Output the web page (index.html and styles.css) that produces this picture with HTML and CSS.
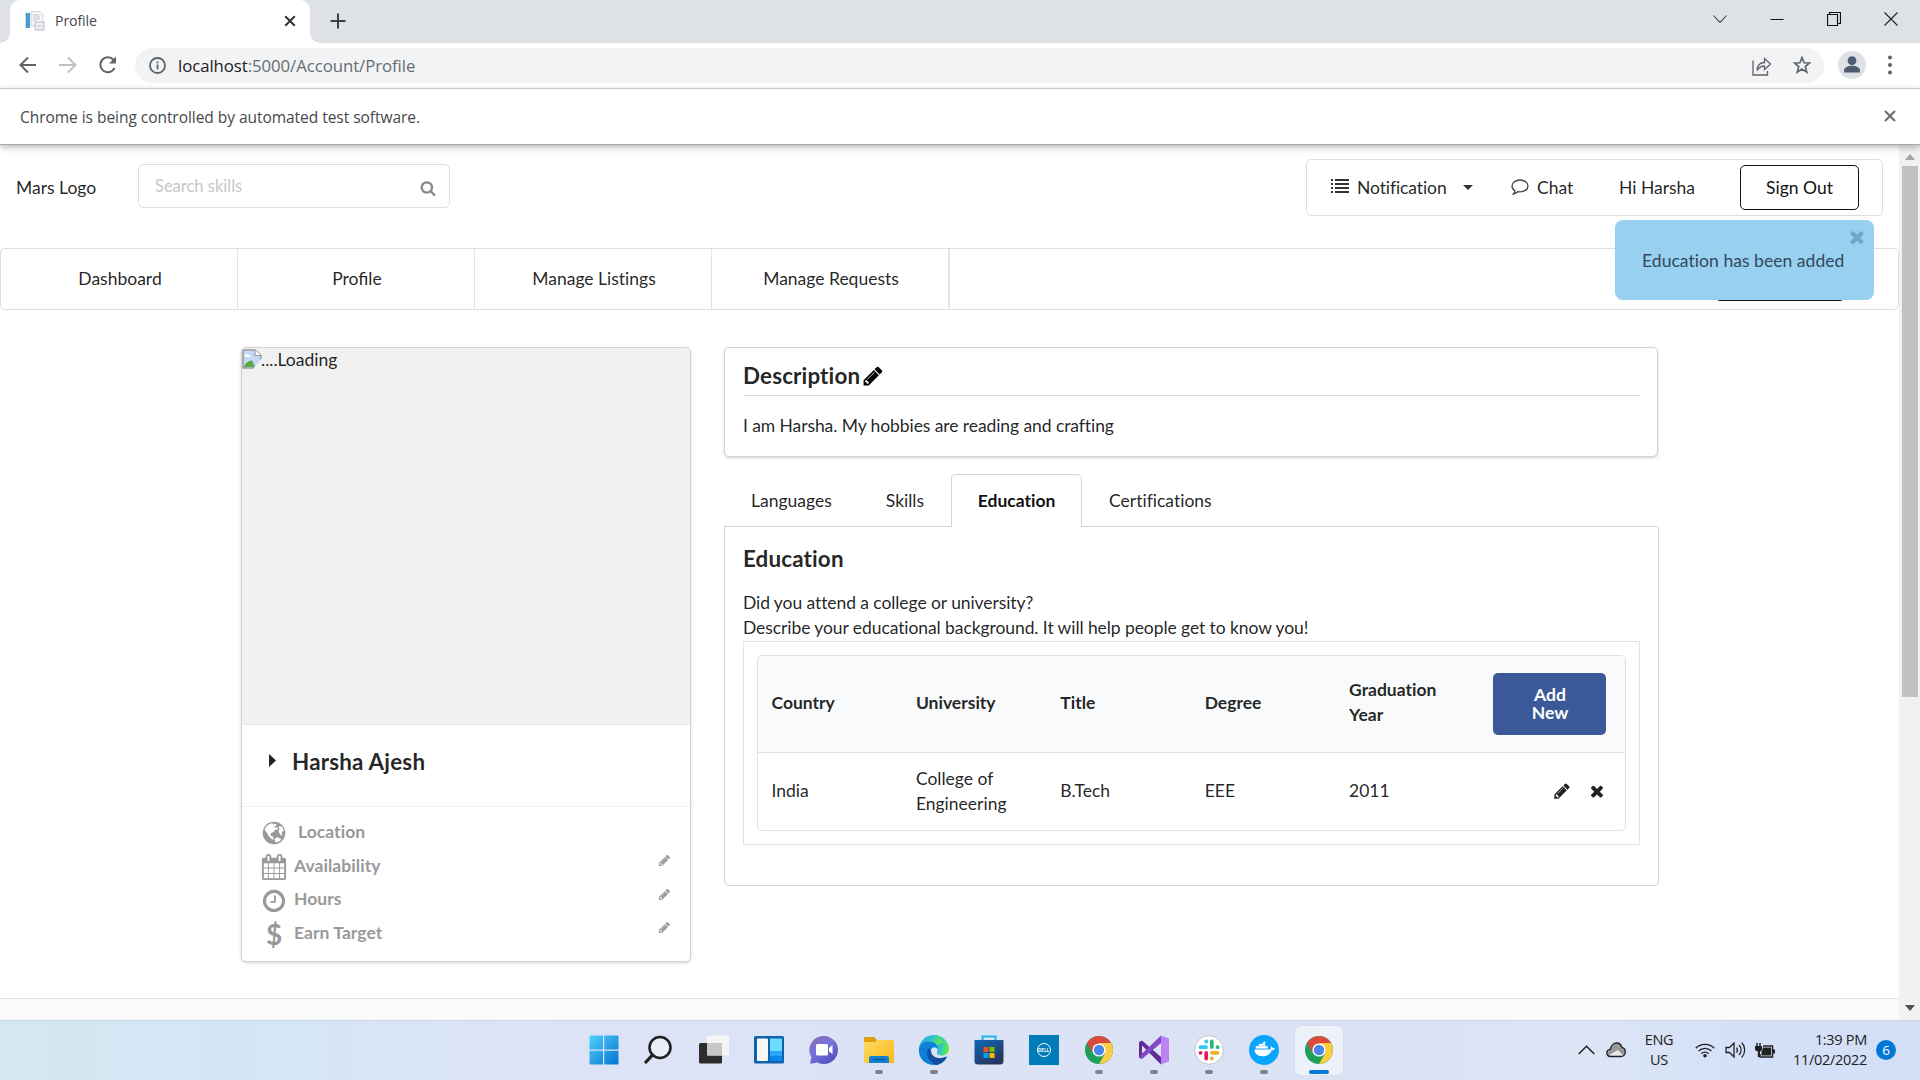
FILE: index.html
```html
<!DOCTYPE html>
<html lang="en">
<head>
<meta charset="utf-8">
<title>Profile</title>
<link rel="stylesheet" href="styles.css">
</head>
<body>
<svg class="defs" width="0" height="0" aria-hidden="true">
  <symbol id="pencil" viewBox="0 0 1792 1792"><path d="M491 1536l91-91-235-235-91 91v107h128v128h107zm523-928q0-22-22-22-10 0-17 7l-542 542q-7 7-7 17 0 22 22 22 10 0 17-7l542-542q7-7 7-17zm-54-192l416 416-832 832h-416v-416zm683 96q0 53-37 90l-166 166-416-416 166-165q36-38 90-38 53 0 91 38l235 234q37 39 37 91z"/></symbol>
  <symbol id="times" viewBox="0 0 1792 1792"><path d="M1490 1322q0 40-28 68l-136 136q-28 28-68 28t-68-28l-294-294-294 294q-28 28-68 28t-68-28l-136-136q-28-28-28-68t28-68l294-294-294-294q-28-28-28-68t28-68l136-136q28-28 68-28t68 28l294 294 294-294q28-28 68-28t68 28l136 136q28 28 28 68t-28 68l-294 294 294 294q28 28 28 68z"/></symbol>
  <symbol id="chrome" viewBox="0 0 28 28">
    <circle cx="14" cy="14" r="14" fill="#1fa05a"/>
    <path d="M14 14 1.9 7A14 14 0 0 1 26.1 7z" fill="#db4a3c"/>
    <path d="M14 7H26.1A14 14 0 0 1 14 28L20 17.5z" fill="#fdcd40"/>
    <path d="M1.9 7 8 17.5 14 7z" fill="#db4a3c"/>
    <circle cx="14" cy="14" r="6.6" fill="#fff"/><circle cx="14" cy="14" r="5.2" fill="#4a86ee"/>
  </symbol>
</svg>

<header class="tabstrip">
  <div class="tab">
    <svg class="favicon" width="20" height="20" viewBox="0 0 20 20"><path d="M1 2h4v15H1z" fill="#4c9bd3"/><path d="M0 1h1v16H0z" fill="#b9dcf2"/><path d="M6 .5h9l3 3V15H6z" fill="#f4f5f7" stroke="#d2d5da"/><path d="M8 4h6M8 6h7M8 8h7M8 10h3" stroke="#c4c7cc"/><path d="M11 11h8v8h-9v-6z" fill="#eceef1" stroke="#b8bcc4"/><path d="M12 15h5" stroke="#c4c7cc"/></svg>
    <span class="tab-title">Profile</span>
    <svg width="12" height="12" viewBox="0 0 12 12"><path d="M1.2 1.2l9.600 9.600M10.800 1.200L1.200 10.800" stroke="#33363a" stroke-width="2"/></svg>
  </div>
  <svg class="new-tab" width="16" height="16" viewBox="0 0 16 16"><path d="M8 .5v15M.5 8h15" stroke="#3c4043" stroke-width="2"/></svg>
  <div class="window-controls">
    <svg width="14" height="10" viewBox="0 0 14 10"><path d="M.5 1.500L7 8.500l6.500-7" fill="none" stroke="#333" stroke-width="1.100"/></svg>
    <svg width="14" height="14" viewBox="0 0 14 14"><path d="M.5 7.500h13" stroke="#111"/></svg>
    <svg width="14" height="16" viewBox="0 0 14 16"><path d="M.5 3.500h10v11H.5zM2.500 3V1.500h11v11H11" fill="none" stroke="#111" stroke-width="1.200"/></svg>
    <svg width="14" height="16" viewBox="0 0 14 16"><path d="M.5 1.500l13 13M13.500 1.500l-13 13" stroke="#222" stroke-width="1.100"/></svg>
  </div>
</header>

<div class="toolbar">
  <svg width="18" height="18" viewBox="0 0 18 18"><path d="M17 9H2M9 1.500L1.500 9 9 16.500" fill="none" stroke="#5f6368" stroke-width="2"/></svg>
  <svg width="18" height="18" viewBox="0 0 18 18"><path d="M0 9h16M9 1.500L16.500 9 9 16.500" fill="none" stroke="#bdc1c6" stroke-width="2"/></svg>
  <svg class="reload" width="20" height="20" viewBox="0 0 20 20"><path d="M16.600 13A7.500 7.500 0 1 1 15.600 5" fill="none" stroke="#5f6368" stroke-width="2"/><path d="M18 1.500V8.500H11z" fill="#5f6368"/></svg>
  <div class="omnibox">
    <svg width="17" height="17" viewBox="0 0 17 17"><circle cx="8.500" cy="8.500" r="7.500" fill="none" stroke="#5f6368" stroke-width="1.800"/><path d="M8.500 7.400v5M8.500 4.400v1.800" stroke="#5f6368" stroke-width="1.800"/></svg>
    <span class="url"><b>localhost</b>:5000/Account/Profile</span>
    <svg class="share" width="20" height="21" viewBox="0 0 20 21"><path d="M1 5.500v14.500h14.500v-4M5 15.500c.5-5.500 3.500-8 7.500-8V3.500l6 5.500-6 5.500v-3.500c-3.500 0-5.500 1.500-7.500 4.500z" fill="none" stroke="#5f6368" stroke-width="1.300"/></svg>
    <svg width="18" height="20" viewBox="0 0 18 20"><path d="M9 2.500l2.100 5.300 5.300.3-4.100 3.500 1.400 5.500L9 14l-4.700 3.100 1.400-5.500L1.600 8.100l5.300-.3z" fill="none" stroke="#5f6368" stroke-width="1.700"/></svg>
  </div>
  <svg class="avatar" width="28" height="34" viewBox="0 0 28 34"><ellipse cx="14" cy="17" rx="14" ry="14" fill="#dee1e6"/><circle cx="14" cy="12.700" r="4.400" fill="#505a73"/><path d="M6 24.500v-2c0-3 4-4.700 8-4.700s8 1.700 8 4.700v2z" fill="#505a73"/></svg>
  <svg class="kebab" width="4" height="20" viewBox="0 0 4 20"><g fill="#5f6368"><circle cx="2" cy="2.500" r="2"/><circle cx="2" cy="10" r="2"/><circle cx="2" cy="17.500" r="2"/></g></svg>
</div>

<div class="infobar">
  <span>Chrome is being controlled by automated test software.</span>
  <svg width="12" height="12" viewBox="0 0 12 12"><path d="M1 1l10 10M11 1L1 11" stroke="#6b6f74" stroke-width="2.200"/></svg>
</div>

<div class="viewport">
  <div class="page">
    <div class="topbar">
      <span class="logo">Mars Logo</span>
      <div class="search">
        <span>Search skills</span>
        <svg width="16" height="16" viewBox="0 0 1792 1792"><path fill="#888" d="M1216 832q0-185-131.500-316.500t-316.500-131.500-316.500 131.500-131.500 316.500 131.500 316.500 316.500 131.500 316.500-131.500 131.500-316.500zm512 832q0 52-38 90t-90 38q-54 0-90-38l-343-342q-179 124-399 124-143 0-273.500-55.500t-225-150-150-225-55.500-273.500 55.500-273.500 150-225 225-150 273.500-55.500 273.500 55.500 225 150 150 225 55.500 273.500q0 220-124 399l343 343q37 37 37 90z"/></svg>
      </div>
      <div class="user-menu">
        <svg class="m-list" width="18" height="14" viewBox="0 0 18 14"><path d="M0 1h2M0 5h2M0 9h2M0 13h2M4 1h14M4 5h14M4 9h14M4 13h14" stroke="#333" stroke-width="2.200"/></svg>
        <span class="m-notification">Notification</span>
        <svg width="10" height="5" viewBox="0 0 10 5"><path d="M0 0h10L5 5z" fill="#333"/></svg>
        <svg class="m-bubble" width="18" height="16" viewBox="0 0 18 16"><path d="M9 1c4.500 0 8 2.500 8 5.900s-3.500 5.900-8 5.900c-.7 0-1.300-.1-1.900-.2C5.600 14 4.200 14.800 2.500 15c.8-.9 1.300-1.900 1.400-3.200C2.100 10.700 1 8.900 1 6.900 1 3.500 4.500 1 9 1z" fill="none" stroke="#444" stroke-width="1.300"/></svg>
        <span class="m-chat">Chat</span>
        <span class="m-user">Hi Harsha</span>
        <span class="sign-out">Sign Out</span>
      </div>
    </div>

    <nav class="main-nav">
      <span>Dashboard</span><span class="fi">Profile</span><span>Manage Listings</span><span>Manage Requests</span>
      <i class="nav-button"></i>
    </nav>

    <div class="content">
      <aside class="card profile">
        <div class="photo">
          <svg width="20" height="20" viewBox="0 0 20 20"><path d="M1 1h12l6 5.500V19H1z" fill="#c5d7f7" stroke="#9a9a9a" stroke-width="1.500"/><path d="M3 7c0-2 3-3 4-1 2 0 2 2 1 2H3z" fill="#fff"/><path d="M2 18c1-4 5-6.500 8-6.500l3 6.500z" fill="#58a940"/><path d="M20 9v11h-9z" fill="#f1f1f1"/><path d="M13 1v5.500h6" fill="#fff" stroke="#9a9a9a" stroke-width="1.200"/></svg><span>....Loading</span>
        </div>
        <div class="name">
          <svg width="7" height="13" viewBox="0 0 7 13"><path d="M0 0l7 6.500L0 13z" fill="#222"/></svg>
          <span>Harsha Ajesh</span>
        </div>
        <ul class="facts">
          <li class="location"><svg width="24" height="24" viewBox="0 0 24 24"><circle cx="12" cy="12" r="11.300" fill="#999"/><path d="M2.500 9C3.500 5.500 6.500 3 10 2.300l1.500 1.200 2-.7 1.500 1.500-2.500 1 .5 1.500 2.500-.5.500 2-3 .7-1.500 2-3 1.500.5 2.500 2 .5.500 3.500-2.500-1.500-3-3.500-1.500-3z" fill="#fff"/><path d="M17.500 5l2.500.8c1 1.500 1.600 3 1.800 5l-1.300-.8-1 2.500 1 2.500-2.500-1.500-1.500-3.500 1-2.500-1-1z" fill="#fff"/><path d="M12.500 18l2.500-1.700 3.500 1.200.5 1.500c-1.500 1.300-3.500 2.300-5.500 2.600z" fill="#fff"/></svg><span>Location</span></li>
          <li><svg width="26" height="26" viewBox="0 0 1792 1792"><path fill="#999" d="M192 1664h288v-288h-288v288zm352 0h320v-288h-320v288zm-352-352h288v-320h-288v320zm352 0h320v-320h-320v320zm-352-384h288v-288h-288v288zm736 736h320v-288h-320v288zm-384-736h320v-288h-320v288zm768 736h288v-288h-288v288zm-384-352h320v-320h-320v320zm-352-864v-288q0-13-9.500-22.500t-22.500-9.500h-64q-13 0-22.500 9.500t-9.500 22.500v288q0 13 9.500 22.500t22.500 9.500h64q13 0 22.500-9.500t9.500-22.500zm736 864h288v-320h-288v320zm-384-384h320v-288h-320v288zm384 0h288v-288h-288v288zm32-480v-288q0-13-9.500-22.500t-22.500-9.500h-64q-13 0-22.500 9.500t-9.500 22.500v288q0 13 9.500 22.500t22.500 9.500h64q13 0 22.500-9.500t9.500-22.500zm384-64v1280q0 52-38 90t-90 38h-1408q-52 0-90-38t-38-90v-1280q0-52 38-90t90-38h128v-96q0-66 47-113t113-47h64q66 0 113 47t47 113v96h384v-96q0-66 47-113t113-47h64q66 0 113 47t47 113v96h128q52 0 90 38t38 90z"/></svg><span>Availability</span><svg class="edit" width="13" height="13"><use href="#pencil"/></svg></li>
          <li><svg width="26" height="26" viewBox="0 0 1792 1792"><path fill="#999" d="M1024 544v448q0 14-9 23t-23 9h-320q-14 0-23-9t-9-23v-64q0-14 9-23t23-9h224v-352q0-14 9-23t23-9h64q14 0 23 9t9 23zm416 352q0-148-73-273t-198-198-273-73-273 73-198 198-73 273 73 273 198 198 273 73 273-73 198-198 73-273zm224 0q0 209-103 385.500t-279.500 279.500-385.500 103-385.500-103-279.500-279.500-103-385.500 103-385.500 279.500-279.500 385.500-103 385.500 103 279.500 279.500 103 385.500z"/></svg><span>Hours</span><svg class="edit" width="13" height="13"><use href="#pencil"/></svg></li>
          <li><b class="dollar">$</b><span>Earn Target</span><svg class="edit" width="13" height="13"><use href="#pencil"/></svg></li>
        </ul>
      </aside>

      <main class="details">
        <section class="card description">
          <h3>Description<svg width="22" height="22"><use href="#pencil"/></svg></h3>
          <p>I am Harsha. My hobbies are reading and crafting</p>
        </section>
        <div class="tabs">
          <span>Languages</span><span>Skills</span><span class="active">Education</span><span>Certifications</span>
        </div>
        <section class="tab-body">
          <h3>Education</h3>
          <p>Did you attend a college or university?<br>Describe your educational background. It will help people get to know you!</p>
          <div class="table-frame">
            <div class="table">
              <div class="row head">
                <span>Country</span><span>University</span><span>Title</span><span>Degree</span><span>Graduation Year</span><span class="add">Add New</span>
              </div>
              <div class="row">
                <span>India</span><span>College of Engineering</span><span>B.Tech</span><span>EEE</span><span>2011</span>
                <span class="actions"><svg width="18" height="18"><use href="#pencil"/></svg><svg width="18" height="18"><use href="#times"/></svg></span>
              </div>
            </div>
          </div>
        </section>
      </main>
    </div>
    <div class="footer"></div>
    <div class="toast"><span>Education has been added</span><svg width="20" height="20"><use href="#times"/></svg></div>
  </div>
  <div class="scrollbar">
    <svg width="10" height="6" viewBox="0 0 10 6"><path d="M0 6h10L5 0z" fill="#a3a3a3"/></svg>
    <i class="thumb"></i>
    <svg class="down" width="10" height="6" viewBox="0 0 10 6"><path d="M0 0h10L5 6z" fill="#505050"/></svg>
  </div>
</div>

<footer class="taskbar">
  <div class="apps">
    <span><svg width="30" height="30" viewBox="0 0 30 30"><defs><linearGradient id="win" x2="1" y2="1"><stop stop-color="#4fd0fb"/><stop offset="1" stop-color="#0674d3"/></linearGradient></defs><path fill="url(#win)" d="M.5 1.500q0-1 1-1H14v14H.5zM15.200.5h13.300q1 0 1 1v13H15.200zM.5 15.700H14v13.800H1.500q-1 0-1-1zM15.200 15.700h14.300v12.800q0 1-1 1H15.200z"/></svg></span>
    <span><svg width="30" height="30" viewBox="0 0 30 30"><circle cx="16" cy="12.500" r="10.500" fill="#e9eef8" stroke="#222" stroke-width="2.600"/><path d="M8.500 20L2 27" stroke="#222" stroke-width="3.300" stroke-linecap="round"/></svg></span>
    <span><svg width="30" height="30" viewBox="0 0 30 30"><rect y="8" width="23" height="20.500" rx="1.500" fill="#2b2b2b"/><rect x="8" y=".5" width="22" height="20" rx="1.500" fill="#f5f5f5"/><path d="M8 8h15v12.500H8z" fill="#c6c6c6"/></svg></span>
    <span><svg width="30" height="30" viewBox="0 0 30 30"><rect y="1" width="30" height="27.500" rx="1.500" fill="#0f62ae"/><rect x="3" y="3.500" width="11" height="22.500" rx="1" fill="#f7f7f7"/><path d="M16 3.500h12V16H16z" fill="#6cdcff"/><path d="M16 16h12v5H16z" fill="#27a7f5"/><path d="M16 21h12v5H16z" fill="#0b86ea"/></svg></span>
    <span><svg width="30" height="30" viewBox="0 0 30 30"><defs><linearGradient id="meet" x2=".7" y2="1"><stop stop-color="#8b6ca8"/><stop offset=".5" stop-color="#7474dc"/><stop offset="1" stop-color="#5350bb"/></linearGradient></defs><path d="M15 1a14 14 0 1 1-6.500 26.400L1 28.800l1.500-6.500A14 14 0 0 1 15 1z" fill="url(#meet)"/><rect x="7" y="9" width="12" height="11.500" rx="1.500" fill="#fff"/><path d="M20 13l3.500-3v9L20 16.500z" fill="#fff"/></svg></span>
    <span class="running"><svg width="30" height="30" viewBox="0 0 30 30"><defs><linearGradient id="fold" x2="1" y2="1"><stop stop-color="#ffdc64"/><stop offset="1" stop-color="#fcb717"/></linearGradient></defs><path d="M0 8V3q0-1 1-1h9l3 3h16q1 0 1 1v2z" fill="#dfa00c"/><path d="M0 7h11l2-2h17v23H0z" fill="url(#fold)"/><path d="M5 28v-5q0-2 2-2h16q2 0 2 2v5z" fill="#1380cc"/><path d="M9 24.500h12" stroke="#09549a" stroke-width="1.300"/></svg></span>
    <span class="running"><svg width="32" height="32" viewBox="0 0 32 32"><defs><linearGradient id="edge" x2="1" y2=".3"><stop stop-color="#1b9fe0"/><stop offset=".55" stop-color="#2fc3cf"/><stop offset="1" stop-color="#5ee749"/></linearGradient></defs><path d="M16 1a15 15 0 0 1 15 13c0 5-3 7.500-7.500 7.500-3.500 0-5-1.500-4.500-3.500 1.500-2.500 0-5.500-3-5.500z" fill="url(#edge)"/><path d="M1 15C1.500 7 8 1 16 1c6 0 9 4 9 8L14 13z" fill="url(#edge)"/><path d="M1 15c1-5 5-7.500 10-7.500 6 0 9 4 8.500 8-1-3-6-3-6.500 1-.5 6 5 9 11 7.500 2-.5 4-1.500 5-1.500C26.500 28 22 31 16 31 7 31 0 24 1 15z" fill="#0f7fd8"/><path d="M10.500 14c-3 5-1 13.500 7.500 17 5-.5 9-4 11-8.500-6 3.500-16 1.500-16-5.500z" fill="#114f9d"/></svg></span>
    <span><svg width="30" height="30" viewBox="0 0 30 30"><defs><linearGradient id="store" x2=".6" y2="1"><stop stop-color="#0f67b8"/><stop offset="1" stop-color="#25375f"/></linearGradient></defs><path d="M8.500 6V1.500h13V6" fill="none" stroke="#1fb5ef" stroke-width="2.200"/><path d="M.5 5h29v21q0 3.500-3.500 3.500H4q-3.500 0-3.500-3.500z" fill="url(#store)"/><path d="M9.500 12h5v5h-5z" fill="#f25022"/><path d="M15.500 12h5v5h-5z" fill="#7fba00"/><path d="M9.500 18h5v5h-5z" fill="#00a4ef"/><path d="M15.500 18h5v5h-5z" fill="#ffb900"/></svg></span>
    <span><i class="dell"><b>DELL</b></i></span>
    <span class="running"><svg width="28" height="28"><use href="#chrome"/></svg></span>
    <span class="running"><svg width="30" height="30" viewBox="0 0 30 30"><path d="M0 7l3-1.500L22 22v7.500L3 10.500v11L0 23z" fill="#5e2d9a"/><path d="M0 23l3 1L22 8V.5L8.500 13.500 3 18.500z" fill="#8247c4"/><path d="M22 .5l8 3v23l-8 3z" fill="#bd83f3"/></svg></span>
    <span class="running"><svg width="30" height="30" viewBox="0 0 30 30"><circle cx="15" cy="15" r="14.300" fill="#fff" stroke="#c3c6cc"/><g stroke-width="3.800" stroke-linecap="round"><path d="M6.500 12.200h5.500M12.200 6.500h.1" stroke="#36c5f0"/><path d="M17.800 6.500V12M23.500 12.200h.1" stroke="#2eb67d"/><path d="M17.800 17.800h5.700M17.800 23.500h.1" stroke="#ecb22e"/><path d="M12.200 17.800v5.700M6.500 17.800h.1" stroke="#e01e5a"/></g></svg></span>
    <span class="running"><svg width="30" height="30" viewBox="0 0 30 30"><circle cx="15" cy="15" r="15" fill="#08a5fb"/><path d="M5.500 14.500h15.500c1-.3 1.300-2 .5-3.300 1.500.3 2 1 2.300 1.800 1-.2 1.700 0 2.200.4-.7 1.300-1.800 1.800-3.300 1.800-1.500 4.200-4.700 6-9 6-5 0-8-2-8.200-6.700z" fill="#fff"/><path d="M7 13.500v-2.200h11.500v2.200M10 10.800V9h6v1.800M14.200 8.600V7h2v1.600" fill="#fff" stroke="#fff" stroke-width=".6" stroke-dasharray="2 .4"/></svg></span>
    <span class="running current"><svg width="28" height="28"><use href="#chrome"/></svg></span>
  </div>
  <div class="tray">
    <svg class="chevron" width="17" height="10" viewBox="0 0 17 10"><path d="M.7 9l7.800-7.800L16.300 9" fill="none" stroke="#222" stroke-width="1.500"/></svg>
    <svg class="cloud" width="20" height="16" viewBox="0 0 20 16"><path d="M4.500 14.500C2 14.500.8 13 .8 11s1.300-3.400 3.400-3.600C5 4 7.500 1 10.500 1c2.800 0 4.800 1.900 5.400 4.300 2.200.6 3.400 2.200 3.400 4.400 0 2.800-1.700 4.800-4.500 4.800z" fill="#999" stroke="#222" stroke-width="1.300"/><path d="M3 13l9-5 5 5.500H5z" fill="#e8e8e8"/></svg>
    <span class="lang">ENG<br>US</span>
    <svg class="wifi" width="20" height="16" viewBox="0 0 20 16"><path d="M.7 6.200a13 13 0 0 1 18.600 0M3.500 9a9.200 9.200 0 0 1 13 0M6.300 11.700a5.300 5.300 0 0 1 7.400 0" fill="none" stroke="#222" stroke-width="1.300"/><circle cx="10" cy="13.800" r="1.800" fill="#222"/></svg>
    <svg class="volume" width="21" height="18" viewBox="0 0 21 18"><path d="M1 6.500h3.500L9 2v14l-4.500-4.500H1z" fill="none" stroke="#222" stroke-width="1.300"/><path d="M11.500 6.500a4 4 0 0 1 0 5M14 4a7 7 0 0 1 0 10M16.700 1.500a11 11 0 0 1 0 15" fill="none" stroke="#222" stroke-width="1.200"/></svg>
    <svg class="battery" width="20" height="16" viewBox="0 0 20 16"><path d="M8 4h9.500v11H5v-3" fill="none" stroke="#222" stroke-width="1.500"/><path d="M8 5.500h8v8H6.500V10z" fill="#222"/><path d="M18 7.500h2v4h-2zM0 4h7v3q0 2-2 2.500V15H2.800V9.500Q0 9 0 7z" fill="#222"/><path d="M2 1v3.500M5 1v3.500" stroke="#222" stroke-width="1.500"/></svg>
    <span class="clock">1:39 PM<br>11/02/2022</span>
    <span class="count">6</span>
  </div>
</footer>
</body>
</html>
```
FILE: styles.css
```css
* { box-sizing: border-box; }
body { margin: 0; width: 1920px; height: 1080px; overflow: hidden; display: flex; flex-direction: column; background: #fff; color: rgba(0,0,0,.87); font: 17.5px/25px Lato, sans-serif; font-variant-ligatures: none; }
svg { display: block; flex: none; }
.defs { position: absolute; }
h3, p, ul { margin: 0; padding: 0; }
h3 { font-size: 22.4px; line-height: 28px; font-weight: 700; letter-spacing: .15px; }
.fi { font-variant-ligatures: normal; }

/* browser chrome */
.tabstrip, .toolbar, .infobar { flex: none; font-family: "Open Sans", sans-serif; }
.tabstrip { height: 43px; background: #dee1e6; display: flex; align-items: flex-start; padding-left: 10px; }
.tab { position: relative; width: 300px; height: 43px; background: #fff; border-radius: 10px 10px 0 0; display: flex; align-items: center; padding: 0 14px 1px 15px; }
.tab::before, .tab::after { content: ""; position: absolute; bottom: 0; width: 10px; height: 10px; }
.tab::before { left: -10px; background: radial-gradient(circle at 0 0, #dee1e6 9.500px, #fff 10px); }
.tab::after { right: -10px; background: radial-gradient(circle at 100% 0, #dee1e6 9.500px, #fff 10px); }
.tab-title { margin: -1px 0 0 10px; flex: 1; font-size: 14.200px; letter-spacing: -.15px; color: #45494d; }
.new-tab { margin: 13px 0 0 20px; }
.window-controls { margin-left: auto; height: 37px; display: flex; align-items: center; gap: 43px; padding-right: 22px; }
.toolbar { height: 46px; border-bottom: 1px solid #d5d7da; display: flex; align-items: center; gap: 22px; padding: 0 0 1px 19px; }
.reload { margin-left: -1px; }
.omnibox { width: 1689px; height: 35px; margin-left: -5px; border-radius: 18px; background: #f1f3f4; display: flex; align-items: center; padding: 0 13px 0 14px; }
.url { margin-left: 12px; flex: 1; font-size: 16.800px; letter-spacing: -.07px; color: #686c71; }
.url b { font-weight: 400; color: #202124; }
.share { margin-right: 21px; }
.avatar { margin-left: -8px; }
.kebab { margin-left: 0; }
.infobar { position: relative; z-index: 2; height: 56px; display: flex; align-items: center; justify-content: space-between; padding: 1px 24px 0 20px; background: #fff; border-bottom: 1px solid #a9a9a9; box-shadow: 0 2px 7px rgba(0,0,0,.3); color: #45494d; font-size: 15.500px; letter-spacing: -.04px; }
.infobar svg { margin-top: -2px; }

/* web page */
.viewport { flex: 1; min-height: 0; display: flex; }
.page { position: relative; width: 1899px; display: flex; flex-direction: column; overflow: hidden; }
.topbar { height: 103px; display: flex; align-items: flex-start; padding: 14px 16px 0 16px; }
.logo { width: 122px; line-height: 58px; }
.search { margin-top: 5px; width: 312px; height: 44px; border: 1px solid #dcdddd; border-radius: 5px; display: flex; align-items: center; justify-content: space-between; padding: 0 13px 0 16px; color: #c7c7c7; font-size: 16.500px; }
.search svg { margin-top: 3px; }
.user-menu { margin-left: auto; width: 577px; height: 57px; border: 1px solid #dedede; border-radius: 5px; display: flex; align-items: center; padding: 0 0 1px 24px; }
.m-list { margin-top: -3px; }
.m-notification { margin: 0 15px 0 8px; width: 91px; letter-spacing: -.1px; }
.m-bubble { margin-left: 38px; }
.m-chat { width: 38px; margin-left: 8px; }
.m-user { width: 77px; margin-left: 44px; }
.sign-out { width: 119px; height: 45px; margin-left: 44px; border: 1.500px solid #111; border-radius: 5px; text-align: center; line-height: 43px; color: #111; }
.main-nav { position: relative; height: 62px; border: 1px solid #dedede; border-radius: 5px; display: flex; }
.main-nav span { width: 237px; padding-left: 2px; border-right: 1px solid #e4e4e4; text-align: center; line-height: 60px; }
.main-nav span:nth-child(4) { width: 238px; border-right-width: 2px; }
.nav-button { position: absolute; left: 1714px; top: 7px; width: 130px; height: 45px; border: 1px solid #111; border-radius: 5px; }
.content { flex: 1; display: flex; align-items: flex-start; gap: 33px; padding: 37px 0 0 241px; }
.card { border: 1px solid #d3d3d4; border-radius: 5px; box-shadow: 0 1px 3px #d4d4d5; background: #fff; }
.profile { width: 450px; height: 615px; overflow: hidden; }
.photo { height: 376px; background: #f1f1f1; display: flex; align-items: flex-start; }
.photo svg { margin-top: 1px; }
.photo span { line-height: 24px; margin-left: -1px; }
.name { height: 83px; border-top: 1px solid #e5e5e5; border-bottom: 1px solid #f0f0f0; display: flex; align-items: center; gap: 16px; padding: 0 0 9px 27px; font-size: 22.400px; font-weight: 700; letter-spacing: .2px; }
.name svg { margin-top: -2px; }
.facts { list-style: none; padding: 8px 19px 0 19px; color: #999; font-weight: 700; }
.facts li { height: 33.700px; display: flex; align-items: center; }
.facts li > :first-child { width: 26px; margin-top: 3px; }
.facts span { margin: -1px 0 0 7px; font-size: 17.500px; line-height: 33px; letter-spacing: .05px; }
.facts .location span { margin-left: 11px; }
.edit { margin-left: auto; margin-top: -10px; fill: #999; }
.dollar { font-size: 28px; font-weight: 700; text-align: center; }
.details { width: 935px; }
.description { width: 934px; height: 110px; padding: 14px 17px 0 18px; }
.description h3 { height: 34px; border-bottom: 1px solid #dcdcdc; display: flex; }
.description h3 svg { margin: 3px 0 0 2px; }
.description p { margin-top: 17px; }
.tabs { width: 934px; height: 53px; margin-top: 17px; border-bottom: 1px solid #d4d4d5; display: flex; }
.tabs span { height: 53px; line-height: 51px; padding: 0 26px; border: 1px solid transparent; white-space: nowrap; }
.tabs .active { width: 131px; padding: 0; text-align: center; border-color: #d4d4d5; border-bottom: 0; border-radius: 5px 5px 0 0; background: #fff; font-weight: 700; color: rgba(0,0,0,.95); }
.tab-body { height: 359px; border: 1px solid #d4d4d5; border-top: 0; border-radius: 0 0 5px 5px; padding: 18px 18px 0; }
.tab-body p { margin-top: 17px; }
.details p { letter-spacing: -.08px; }
.table-frame { height: 204px; margin-top: 1px; border: 1px solid #e3e4e4; padding: 13px; }
.table { height: 176px; border: 1px solid #dfe0e1; border-radius: 5px; overflow: hidden; }
.row { display: grid; grid-template-columns: repeat(5, 144.400px) 1fr; align-items: center; height: 77px; padding: 0 0 2px 13.500px; }
.row span { padding-right: 30px; }
.head { height: 97px; padding-bottom: 4px; background: #f9fafb; border-bottom: 1px solid #e1e2e3; font-weight: 700; }
.head .add { width: 113px; height: 62px; margin-top: 4px; padding: 13px 28px; background: #3b5998; border-radius: 5px; color: #fff; line-height: 17.500px; text-align: center; }
.row .actions { display: flex; justify-content: flex-end; gap: 17px; padding-right: 19px; fill: #222; }
.footer { height: 22px; border-top: 1px solid #e5e5e5; background: #fafafa; }
.toast { position: absolute; left: 1615px; top: 75px; width: 259px; height: 80px; border-radius: 8px; background: #98d1ef; display: flex; align-items: center; padding: 0 0 0 27px; color: #33485d; letter-spacing: .05px; }
.toast svg { position: absolute; left: 232px; top: 7px; fill: #6ba9cc; }
.scrollbar { width: 21px; background: #f1f1f1; display: flex; flex-direction: column; align-items: center; padding-top: 9px; }
.thumb { width: 16px; height: 531px; margin-top: 6px; background: #c1c1c1; }
.down { margin: auto 0 9px; }

/* taskbar */
.taskbar { position: relative; flex: none; height: 60px; border-top: 1px solid #cbd5e6; background: linear-gradient(90deg, #d3e8f3 0, #d5e6f4 300px, #dde3f6 560px, #dae2f4 1300px, #dbe5f5 1600px, #d4e0f8 1760px, #d2dff6); display: flex; font-family: "Open Sans", sans-serif; color: #222; }
.apps { margin-left: 576px; display: flex; }
.apps span { position: relative; width: 55px; height: 58px; display: flex; justify-content: center; align-items: center; }
.running::after { content: ""; position: absolute; bottom: 5px; left: 24px; width: 8px; height: 4px; border-radius: 2px; background: #7d818a; }
.current::before { content: ""; position: absolute; left: 4px; top: 5px; width: 48px; height: 49px; border-radius: 5px; background: #edf1fa; box-shadow: 0 0 1px #aab3c6; }
.current svg { position: relative; }
.current::after { left: 18px; width: 20px; background: #0078d4; }
.dell { width: 30px; height: 30px; background: #007db8; display: grid; place-items: center; }
.dell b { width: 14px; height: 14px; border: 1px solid #fff; border-radius: 50%; color: #fff; font: 700 4.500px/12px "Open Sans", sans-serif; text-align: center; }
.tray { margin-left: auto; display: flex; align-items: center; padding: 0 24px 1px 0; font-size: 14.500px; line-height: 20px; letter-spacing: -.3px; }
.cloud { margin-left: 11px; }
.lang { width: 32px; margin: 0 20px 0 17px; text-align: center; }
.volume { margin-left: 10px; }
.battery { margin-left: 9px; }
.clock { width: 92px; margin-top: -1px; text-align: right; }
.count { width: 20px; height: 20px; margin-left: 9px; border-radius: 50%; background: #0078d4; color: #fff; font-size: 13.500px; text-align: center; }
```
